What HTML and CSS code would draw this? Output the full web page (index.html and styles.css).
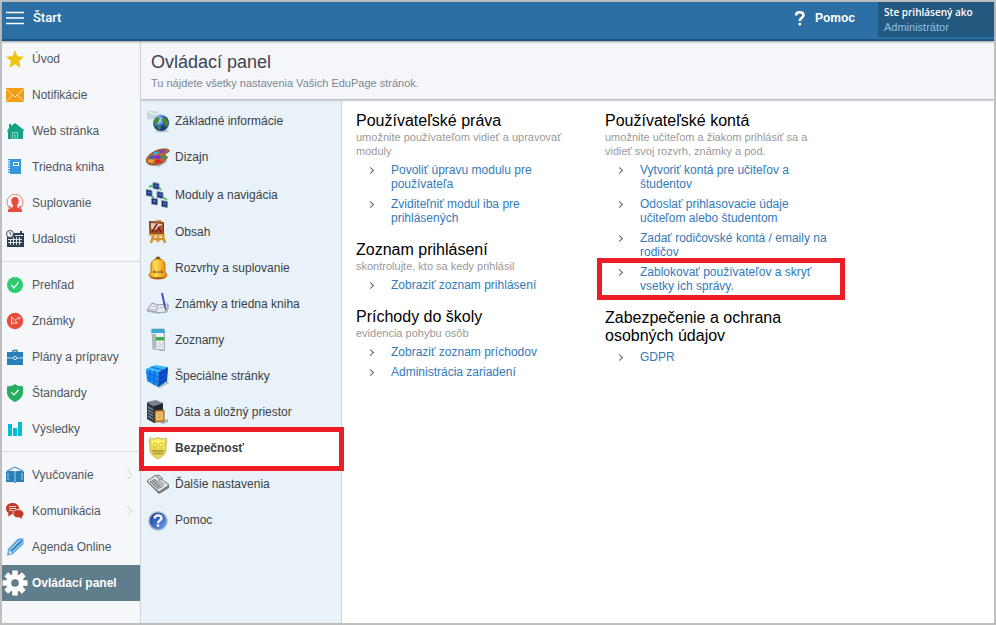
FILE: index.html
```html
<!DOCTYPE html>
<html lang="sk">
<head>
<meta charset="utf-8">
<title>Ovládací panel</title>
<link rel="stylesheet" href="styles.css">
</head>
<body>
<div class="app">
  <header class="topbar">
    <button class="start" type="button">
      <svg width="18" height="14" viewBox="0 0 18 14"><path d="M0 1.5h18M0 7h18M0 12.5h18" stroke="#fff" stroke-width="1.6"/></svg>
      <span>Štart</span>
    </button>
    <a class="help" href="#"><svg width="12" height="16" viewBox="0 0 12 16"><path d="M2 5.500C2 3.200 3.700 2.300 5.800 2.300S9.500 3.400 9.500 5.300C9.500 7.800 5.800 7.800 5.800 11" fill="none" stroke="#fff" stroke-width="2.500"/><circle cx="5.800" cy="14" r="1.500" fill="#fff"/></svg><span>Pomoc</span></a>
    <a class="user" href="#"><strong>Ste prihlásený ako</strong><span>Administrátor</span></a>
  </header>
  <div class="body">
    <nav class="sidebar">
      <a href="#"><svg width="18" height="18" viewBox="0 0 18 18"><path fill="#f1c40f" d="M9 0l2.500 6.300 6.500.500-5 4.300 1.700 6.600L9 14.200l-5.700 3.500L5 11.100 0 6.800l6.500-.5z"/></svg><span>Úvod</span></a>
      <a href="#"><svg width="18" height="18" viewBox="0 0 18 18"><path fill="#f39c12" d="M0 2h18v14H0z"/><path d="M0 3l9 8 9-8M0 15.500l6.500-6.500M18 15.500L11.500 9" fill="none" stroke="#f9e3bd"/></svg><span>Notifikácie</span></a>
      <a href="#"><svg width="18" height="18" viewBox="0 0 18 18"><path fill="#16a085" d="M1 9L3 6V2h2v2l4-3 9 7-1 2v7H2v-7z"/><path fill="none" stroke="#8dd4c5" d="M6.500 17v-6.500h5V17M9 12v5"/></svg><span>Web stránka</span></a>
      <a href="#"><svg width="18" height="18" viewBox="0 0 18 18"><path fill="#3498db" d="M4 1h11v15H4z"/><path d="M3.500 1v15" stroke="#3498db" stroke-width="3" stroke-dasharray="1.200 1.300"/><path fill="none" stroke="#fff" d="M7.500 4.500h5v3h-5z"/></svg><span>Triedna kniha</span></a>
      <a href="#"><svg width="18" height="18" viewBox="0 0 18 18"><g fill="#e74c3c"><path d="M9 3c2.500 0 4 1.700 3.700 4.200-.3 2-1 3.500-1.700 4.200v1.600l5 2.500V18H2v-2.500L7 13v-1.600C6.300 10.700 5.600 9.200 5.300 7.200 5 4.700 6.500 3 9 3z"/></g><path fill="none" stroke="#e98578" d="M4 14.500A8 8 0 1 1 14 14.500"/><path fill="#e98578" d="M2 11.500l4 1-3 3zM16 11.500l-4 1 3 3z"/></svg><span>Suplovanie</span></a>
      <a href="#"><svg width="18" height="18" viewBox="0 0 18 18"><path fill="#2c3e50" d="M2 1h2v2h10V1h2v2h2v14H1V3h1z"/><path stroke="#dce2e8" d="M4.500 9v6M7.500 7v8M10.500 7v8M13.500 7v8M2 9.500h14M2 12.500h14M9 5.500h8"/><circle cx="4" cy="4" r="3.500" fill="#fff" stroke="#34495e"/><path d="M4 2v2l1.500 1" fill="none" stroke="#34495e"/></svg><span>Udalosti</span></a>
      <hr>
      <a href="#"><svg width="18" height="18" viewBox="0 0 18 18"><circle cx="9" cy="9" r="8" fill="#2ecc71"/><path d="M5.500 9l2.500 3 4.500-6" fill="none" stroke="#fff" stroke-width="1.200"/></svg><span>Prehľad</span></a>
      <a href="#"><svg width="18" height="18" viewBox="0 0 18 18"><circle cx="9" cy="9" r="8.200" fill="#e74c3c"/><path d="M5.500 13V5l6 6H5.500M9.500 8l2-2M11.500 6h3M13 4.500v3" fill="none" stroke="#fbd5d0"/></svg><span>Známky</span></a>
      <a href="#"><svg width="18" height="18" viewBox="0 0 18 18"><path fill="#2980b9" d="M1 4h16v13H1z"/><path d="M6.500 4l.8-1.500h3.400l.8 1.500" fill="none" stroke="#2980b9" stroke-width="1.500"/><path d="M1 10h6M11 10h6" stroke="#c5deef"/><circle cx="9" cy="10" r="1.600" fill="#2980b9" stroke="#d7e8f4"/></svg><span>Plány a prípravy</span></a>
      <a href="#"><svg width="18" height="18" viewBox="0 0 18 18"><path fill="#27ae60" d="M9 0c2 1.700 5 2.500 8 2.200v6.300c0 4-3.300 7.500-8 9.500-4.700-2-8-5.500-8-9.500V2.200C4 2.500 7 1.700 9 0z"/><path d="M5.500 8.500L8 11l4.500-5" fill="none" stroke="#fff" stroke-width="1.200"/></svg><span>Štandardy</span></a>
      <a href="#"><svg width="18" height="18" viewBox="0 0 18 18"><path fill="#00bcd4" d="M2 4h4v12H2zM7 8h4v8H7zM12 2h4v14h-4z"/></svg><span>Výsledky</span></a>
      <hr>
      <a href="#"><svg width="18" height="18" viewBox="0 0 18 18"><path fill="#2980b9" d="M0 5.500Q5 4 9 5.500 13 4 18 5.500V16h-7l-2 1-2-1H0z"/><path fill="none" stroke="#2980b9" d="M1 5l8-4 8 4"/><path d="M9 6v10M2 7v7M16 7v7" stroke="#a8cce6"/></svg><span>Vyučovanie</span><svg class="more" width="6" height="10" viewBox="0 0 6 10"><path d="M.500.500L5 5 .500 9.500"/></svg></a>
      <a href="#"><svg width="18" height="18" viewBox="0 0 18 18"><path fill="#c0392b" d="M6.500 1C10 1 13 3 13 6.300S10 12 6.500 12L2 14.500l.5-3.500C1 10 0 8.300 0 6.500 0 3.200 3 1 6.500 1z"/><path fill="#c0392b" stroke="#f5f7fa" stroke-width=".8" d="M12 7.500c3.500 0 5.800 1.700 5.800 4.200 0 1.500-.8 2.500-1.800 3.200l.5 2.600-3.300-1.700c-3.600.2-6.200-1.500-6.200-4 0-2.600 2-4.300 5-4.300z"/><path d="M3 4.500h7M3 6.500h7M3 8.500h4" stroke="#f3cdc9"/></svg><span>Komunikácia</span><svg class="more" width="6" height="10" viewBox="0 0 6 10"><path d="M.500.500L5 5 .500 9.500"/></svg></a>
      <a href="#"><svg width="18" height="18" viewBox="0 0 18 18"><path fill="#5da5de" d="M12 .5h5.500V6L7 16l-6 1.800L2 11z"/><path fill="#f5f7fa" d="M3.500 12l2.500 3-3 1z"/><path d="M4.500 11.500L14 2M6.500 14L16.500 4" stroke="#c9e2f5"/><path d="M5.500 13L15.500 3" stroke="#2f7fc0" stroke-width="1.500"/></svg><span>Agenda Online</span></a>
      <a class="current" href="#" aria-current="page"><svg class="gear" width="26" height="26" viewBox="0 0 26 26"><g stroke="#fff" stroke-width="5.500" stroke-linecap="butt"><path d="M13 .5v25M.5 13h25M4.200 4.200l17.600 17.600M4.200 21.800L21.800 4.200"/></g><circle cx="13" cy="13" r="9" fill="#fff"/><circle cx="13" cy="13" r="3.800" fill="#607d8b"/></svg><span>Ovládací panel</span></a>
    </nav>
    <div class="main">
      <div class="title">
        <h1>Ovládací panel</h1>
        <p>Tu nájdete všetky nastavenia Vašich EduPage stránok.</p>
      </div>
      <div class="split">
        <nav class="sections">
          <a href="#"><svg width="24" height="24" viewBox="0 0 24 24"><defs><radialGradient id="globe" cx=".35" cy=".3"><stop offset="0" stop-color="#d6eeff"/><stop offset=".5" stop-color="#5b9dea"/><stop offset="1" stop-color="#173c8c"/></radialGradient></defs><path d="M0 1l15 2v5L2 11z" fill="#cbd6dc"/><path d="M0 1l9 5 6-3" fill="none" stroke="#fff"/><ellipse cx="16" cy="22" rx="7" ry="1.500" fill="#b9c4cb"/><circle cx="15" cy="14" r="8" fill="url(#globe)"/><path fill="#4b8a22" d="M8 12l3-4 3 1-1 3-2 2v2l-2 1zM17 8l4 2 1.500 4-1.500 4-3-1 1-3-3-2zM12 17l3 1-1 3-3-2z"/></svg><span>Základné informácie</span></a>
          <a href="#"><svg width="24" height="24" viewBox="0 0 24 24"><path d="M3 19q8 3 17-5l1 3-8 5z" fill="#b5bec2"/><path fill="#b46a3b" stroke="#7f4321" d="M.5 14.500C2 9 11 4 18 4c4 0 6 1 5 2.500-1 1-4 1.500-4 3s3 1.500 2 3.500c-2 4-8 7-14 7C2 20 0 17.500.5 14.500z"/><ellipse cx="10" cy="8" rx="2.500" ry="1.500" fill="#20b9e6"/><ellipse cx="16" cy="6.500" rx="3" ry="1.500" fill="#7543d7"/><ellipse cx="6" cy="12" rx="3" ry="1.600" fill="#3157e5"/><ellipse cx="12" cy="12" rx="3" ry="2" fill="#a421c0"/><ellipse cx="17" cy="12" rx="2.500" ry="1.700" fill="#26a835"/><ellipse cx="5" cy="16" rx="3" ry="1.700" fill="#f4a11d"/><ellipse cx="12" cy="16.500" rx="3" ry="1.800" fill="#e8241a"/></svg><span>Dizajn</span></a>
          <a href="#"><svg width="24" height="27" viewBox="0 0 24 27"><g stroke="#42cc51" stroke-width="2" fill="none"><path d="M8 4L3 6M12 5l3 4M7 15v4M15 15l6 4"/></g><g fill="#142e68" stroke="#8496b3"><path d="M7 1.500l6 1v6l-6-1zM0 8.500l6 1v6l-6-1zM11 10.500l6 1v6l-6-1zM5.500 17l6 1v6l-6-1zM15.500 19.500l6 1v6l-6-1z"/></g><path fill="#4774d6" d="M8.500 3.500l3 .5v2l-3-.5zM1.500 10.500l3 .5v2l-3-.5zM12.500 12.500l3 .5v2l-3-.5zM7 19l3 .5v2l-3-.5zM17 21.500l3 .5v2l-3-.5z"/></svg><span>Moduly a navigácia</span></a>
          <a href="#"><svg width="24" height="24" viewBox="0 0 24 24"><path d="M8 13L5 23M16 13l3 10M12 13v9M7 19h11M10 0h4v3" stroke="#d3922f" stroke-width="2.500" fill="none"/><path fill="#a85125" stroke="#6b3d26" d="M3.500 1.500l14 1v11l-13.500 1z"/><path fill="#d9cbb4" d="M5 3l11 1-1 4-5 2-5-1z"/><path d="M6 12l5-8M9 12l6-6M12 7l3 5" stroke="#7c2015" stroke-width="1.500"/><path d="M3 15h16" stroke="#e4a33e" stroke-width="2"/></svg><span>Obsah</span></a>
          <a href="#"><svg width="24" height="24" viewBox="0 0 24 24"><defs><linearGradient id="bell"><stop stop-color="#e48a05"/><stop offset=".35" stop-color="#ffe05c"/><stop offset="1" stop-color="#e38602"/></linearGradient></defs><ellipse cx="12" cy="21" rx="8" ry="2.500" fill="#a45b08"/><circle cx="12" cy="3" r="2.500" fill="#76501c"/><path fill="url(#bell)" stroke="#c27406" d="M12 3c5 0 7 3 7 6v7l2 3c0 2-2 2.500-9 2.500S3 21 3 19l2-3V9c0-3 2-6 7-6z"/><path d="M8 16h8M9 14l-2 2 2 1M15 14l2 2-2 1" fill="none" stroke="#8b5407"/></svg><span>Rozvrhy a suplovanie</span></a>
          <a href="#"><svg width="24" height="24" viewBox="0 0 24 24"><path d="M1 18l5-7 6 2 10-1-2 8-8 1-2-1z" fill="#e8eaf0" stroke="#8f98a7"/><path d="M12 13l-2 7M1 19l9 2 11-1 2-7" fill="none" stroke="#a3adba"/><path d="M3 17l7 1M5 14l6 1M13 16l7-1" stroke="#bdc4ce"/><path d="M16 1l3 14" stroke="#4455bc" stroke-width="2"/><path d="M19 15l.5 3" stroke="#333"/></svg><span>Známky a triedna kniha</span></a>
          <a href="#"><svg width="24" height="24" viewBox="0 0 24 24"><path d="M6 21l11 2 2-1V2z" fill="#8e999e"/><path fill="#edf2f2" stroke="#a6b0b3" d="M6 1h12l.5 21L7 21z"/><path fill="#38a8d7" d="M5.500 1h13v4h-13z"/><path fill="#a8b6bb" d="M7 6h3l.5 14H7.500z"/><path fill="#3bae48" d="M10 9h8v3.500h-8z"/><path d="M12 15h5M12 17h5M12 19h5" stroke="#c4cdd1"/></svg><span>Zoznamy</span></a>
          <a href="#"><svg width="24" height="24" viewBox="0 0 24 24"><path d="M10 23l12-6 1 2-9 5z" fill="#abb9c3"/><path fill="#38b8ff" d="M0 5l9-4 13 2-9 5z"/><path fill="#168cf1" d="M0 5l13 3-1 15L1 17z"/><path fill="#0b3dad" d="M13 8l9-5-1 14-9 6z"/><path fill="none" stroke="#0a63dc" d="M4 6v12M8.500 7l-.5 14M0 9l13 4M1 13l11 5M5 3l12 3M16 6v14M19 5v13M13 13l9-5M12 18l9-5"/></svg><span>Špeciálne stránky</span></a>
          <a href="#"><svg width="24" height="24" viewBox="0 0 24 24"><path d="M12 22l10-3v3l-5 2z" fill="#aab1b5"/><path fill="#343b42" d="M1 2l7 4v17l-7-4z"/><path fill="#79818a" d="M1 2l9-2 7 3-9 3z"/><path fill="#1f252b" d="M8 6l9-3v17l-9 3z"/><path d="M2 7l5 3M2 10l5 3M2 13l5 3M2 16l5 3" stroke="#87a6c5"/><path fill="#dc9d43" stroke="#99631f" d="M9 11l9-1v11l-9 1z"/><path d="M11 13h5v6h-5zM11 16h5" fill="none" stroke="#f4d58e"/></svg><span>Dáta a úložný priestor</span></a>
          <a class="selected" href="#"><svg width="24" height="24" viewBox="0 0 24 24"><path fill="#ead94e" stroke="#c3ba80" d="M12 1.500l3 1.500 5-1 1 4-1 3v5c0 4-4 7-8 9-4-2-8-5-8-9v-5l-1-3 1-4 5 1z"/><path fill="#fff26c" d="M12 3l3 1 4-1-1 5v4l-12-2-1-7 4 1z"/><path d="M6 15h12M7 17.500h10" fill="none" stroke="#a8973a" stroke-width="1.500"/><circle cx="9" cy="9" r="2" fill="none" stroke="#d4ba2c"/><circle cx="15" cy="9" r="2" fill="none" stroke="#d4ba2c"/></svg><span>Bezpečnosť</span></a>
          <a href="#"><svg width="24" height="24" viewBox="0 0 24 24"><path fill="#777a7d" d="M1 10l12 12 10-6v-3L9 3z"/><path fill="#e8e9e9" stroke="#737679" d="M1 9l9-6 13 10-10 7z"/><path d="M4 9l9 8M6 8l9 8M8 7l4 4" stroke="#707477" stroke-width="1.200"/><path d="M12 8l6 5M10 10l7 5" stroke="#a9acaf" stroke-width="2"/><path fill="#bfc2c4" stroke="#858889" d="M10 4l3-1 4 4-3 1z"/></svg><span>Ďalšie nastavenia</span></a>
          <a href="#"><svg width="24" height="24" viewBox="0 0 24 24"><defs><linearGradient id="orb" x1="0" y1="0" x2="1" y2="1"><stop stop-color="#183d9d"/><stop offset="1" stop-color="#66a2ee"/></linearGradient></defs><circle cx="12" cy="13" r="10" fill="#bcc3c9"/><circle cx="12" cy="13" r="8.500" fill="url(#orb)"/><path d="M8.500 10.500C9 6.500 15.500 6.500 15.500 10.200c0 2.500-3.500 2-3.500 5" fill="none" stroke="#fff" stroke-width="2.200"/><circle cx="12" cy="17.500" r="1.300" fill="#fff"/></svg><span>Pomoc</span></a>
        </nav>
        <main class="content">
          <div class="column">
            <section>
              <h2>Používateľské práva</h2>
              <p>umožnite používateľom vidieť a upravovať moduly</p>
              <ul>
                <li><a href="#">Povoliť úpravu modulu pre používateľa</a></li>
                <li><a href="#">Zviditeľniť modul iba pre prihlásených</a></li>
              </ul>
            </section>
            <section>
              <h2>Zoznam prihlásení</h2>
              <p>skontrolujte, kto sa kedy prihlásil</p>
              <ul>
                <li><a href="#">Zobraziť zoznam prihlásení</a></li>
              </ul>
            </section>
            <section>
              <h2>Príchody do školy</h2>
              <p>evidencia pohybu osôb</p>
              <ul>
                <li><a href="#">Zobraziť zoznam príchodov</a></li>
                <li><a href="#">Administrácia zariadení</a></li>
              </ul>
            </section>
          </div>
          <div class="column">
            <section>
              <h2>Používateľské kontá</h2>
              <p>umožnite učiteľom a žiakom prihlásiť sa a vidieť svoj rozvrh, známky a pod.</p>
              <ul>
                <li><a href="#">Vytvoriť kontá pre učiteľov a študentov</a></li>
                <li><a href="#">Odoslať prihlasovacie údaje učiteľom alebo študentom</a></li>
                <li><a href="#">Zadať rodičovské kontá / emaily na rodičov</a></li>
                <li class="marked"><a href="#">Zablokovať používateľov a skryť vsetky ich správy.</a></li>
              </ul>
            </section>
            <section>
              <h2>Zabezpečenie a ochrana osobných údajov</h2>
              <ul>
                <li><a href="#">GDPR</a></li>
              </ul>
            </section>
          </div>
        </main>
      </div>
    </div>
  </div>
</div>
</body>
</html>
```
FILE: styles.css
```css
* { box-sizing: border-box; }
body {
  margin: 0;
  font-family: "Liberation Sans", Arial, sans-serif;
  font-size: 12px;
  line-height: 14px;
  color: #3a3f45;
  background: #fff;
}
a { color: inherit; text-decoration: none; }
h1, h2, p, ul { margin: 0; padding: 0; font-weight: normal; }
svg { display: block; flex: none; }

.app {
  display: flex;
  flex-direction: column;
  min-height: 100vh;
  border: 2px solid #bebebe;
}

.topbar {
  display: flex;
  align-items: flex-start;
  height: 39px;
  background: #2c6fa4;
  border-bottom: 2px solid #1d5484;
  box-shadow: 0 1px 2px #999;
  position: relative;
  z-index: 1;
  color: #fff;
}
.start {
  display: flex;
  align-items: center;
  gap: 9px;
  margin-right: auto;
  padding: 8px 4px;
  border: 0;
  background: none;
  color: inherit;
  font: 500 13px/16px Roboto, "Liberation Sans", sans-serif;
}
.help {
  display: flex;
  align-items: center;
  gap: 9px;
  padding: 8px 23px 0 0;
  font: bold 12px/16px "Liberation Sans", Arial, sans-serif;
}
.user {
  display: flex;
  flex-direction: column;
  width: 116px;
  padding: 3px 6px;
  background: #23587f;
  font-size: 11px;
  color: #8fc0ea;
}
.user strong {
  font: 600 10px/15px "Open Sans", sans-serif;
  color: #fff;
}

.body { display: flex; flex: 1; }

.sidebar {
  width: 139px;
  flex: none;
  background: #f5f7fa;
  border-right: 1px solid #cfd4d9;
  color: #50565f;
}
.sidebar a {
  display: flex;
  align-items: center;
  gap: 8px;
  height: 36px;
  padding: 0 7px 0 4px;
}
.sidebar hr {
  margin: 4px 0 5px;
  border: 0;
  border-top: 1px solid #d9dbde;
}
.sidebar .more {
  margin-left: auto;
  fill: none;
  stroke: #cdd1d5;
}
.sidebar .gear { margin: 0 -4px; }
.sidebar .current {
  background: #607d8b;
  color: #fff;
  font-weight: bold;
}

.main {
  display: flex;
  flex-direction: column;
  flex: 1;
  min-width: 0;
}
.title {
  padding: 11px 10px 9px;
  background: #f5f6f9;
  border-bottom: 1px solid #b9bcc0;
  box-shadow: 0 1px 2px #c8ccd0;
  position: relative;
}
.title h1 { font-size: 18px; line-height: 20px; color: #3c4450; }
.title p { margin-top: 4px; font-size: 11px; color: #7c8794; }

.split { display: flex; flex: 1; }
.sections {
  width: 201px;
  flex: none;
  padding-top: 3px;
  background: #e9f2f9;
  border-right: 1px solid #c8d6e2;
}
.sections a {
  display: flex;
  align-items: center;
  gap: 5px;
  padding: 6px 5px;
}
.sections .selected {
  position: relative;
  background: #fff;
  font-weight: bold;
}
.selected::after, .marked::after {
  content: "";
  position: absolute;
  border: 5px solid #ee1c24;
}
.selected::after { inset: -3px -3px -5px -2px; }

.content {
  display: flex;
  flex: 1;
  gap: 21px;
  padding: 12px 14px;
}
.column {
  display: flex;
  flex-direction: column;
  gap: 13px;
  width: 228px;
}
.column h2 { font-size: 16px; line-height: 18px; color: #000; }
.column p { font-size: 11px; color: #999; }
.column ul { margin-top: 2px; list-style: none; }
.column li {
  position: relative;
  display: flex;
  padding: 3px 0;
  color: #337ab7;
}
.column li::before {
  content: "";
  flex: none;
  width: 4px;
  height: 4px;
  margin: 5px 19px 0 12px;
  border: solid #666;
  border-width: 1px 1px 0 0;
  transform: rotate(45deg);
}
.column li a { margin-left: -1px; }
.marked::after { inset: -4px -12px -4px -8px; }
```
